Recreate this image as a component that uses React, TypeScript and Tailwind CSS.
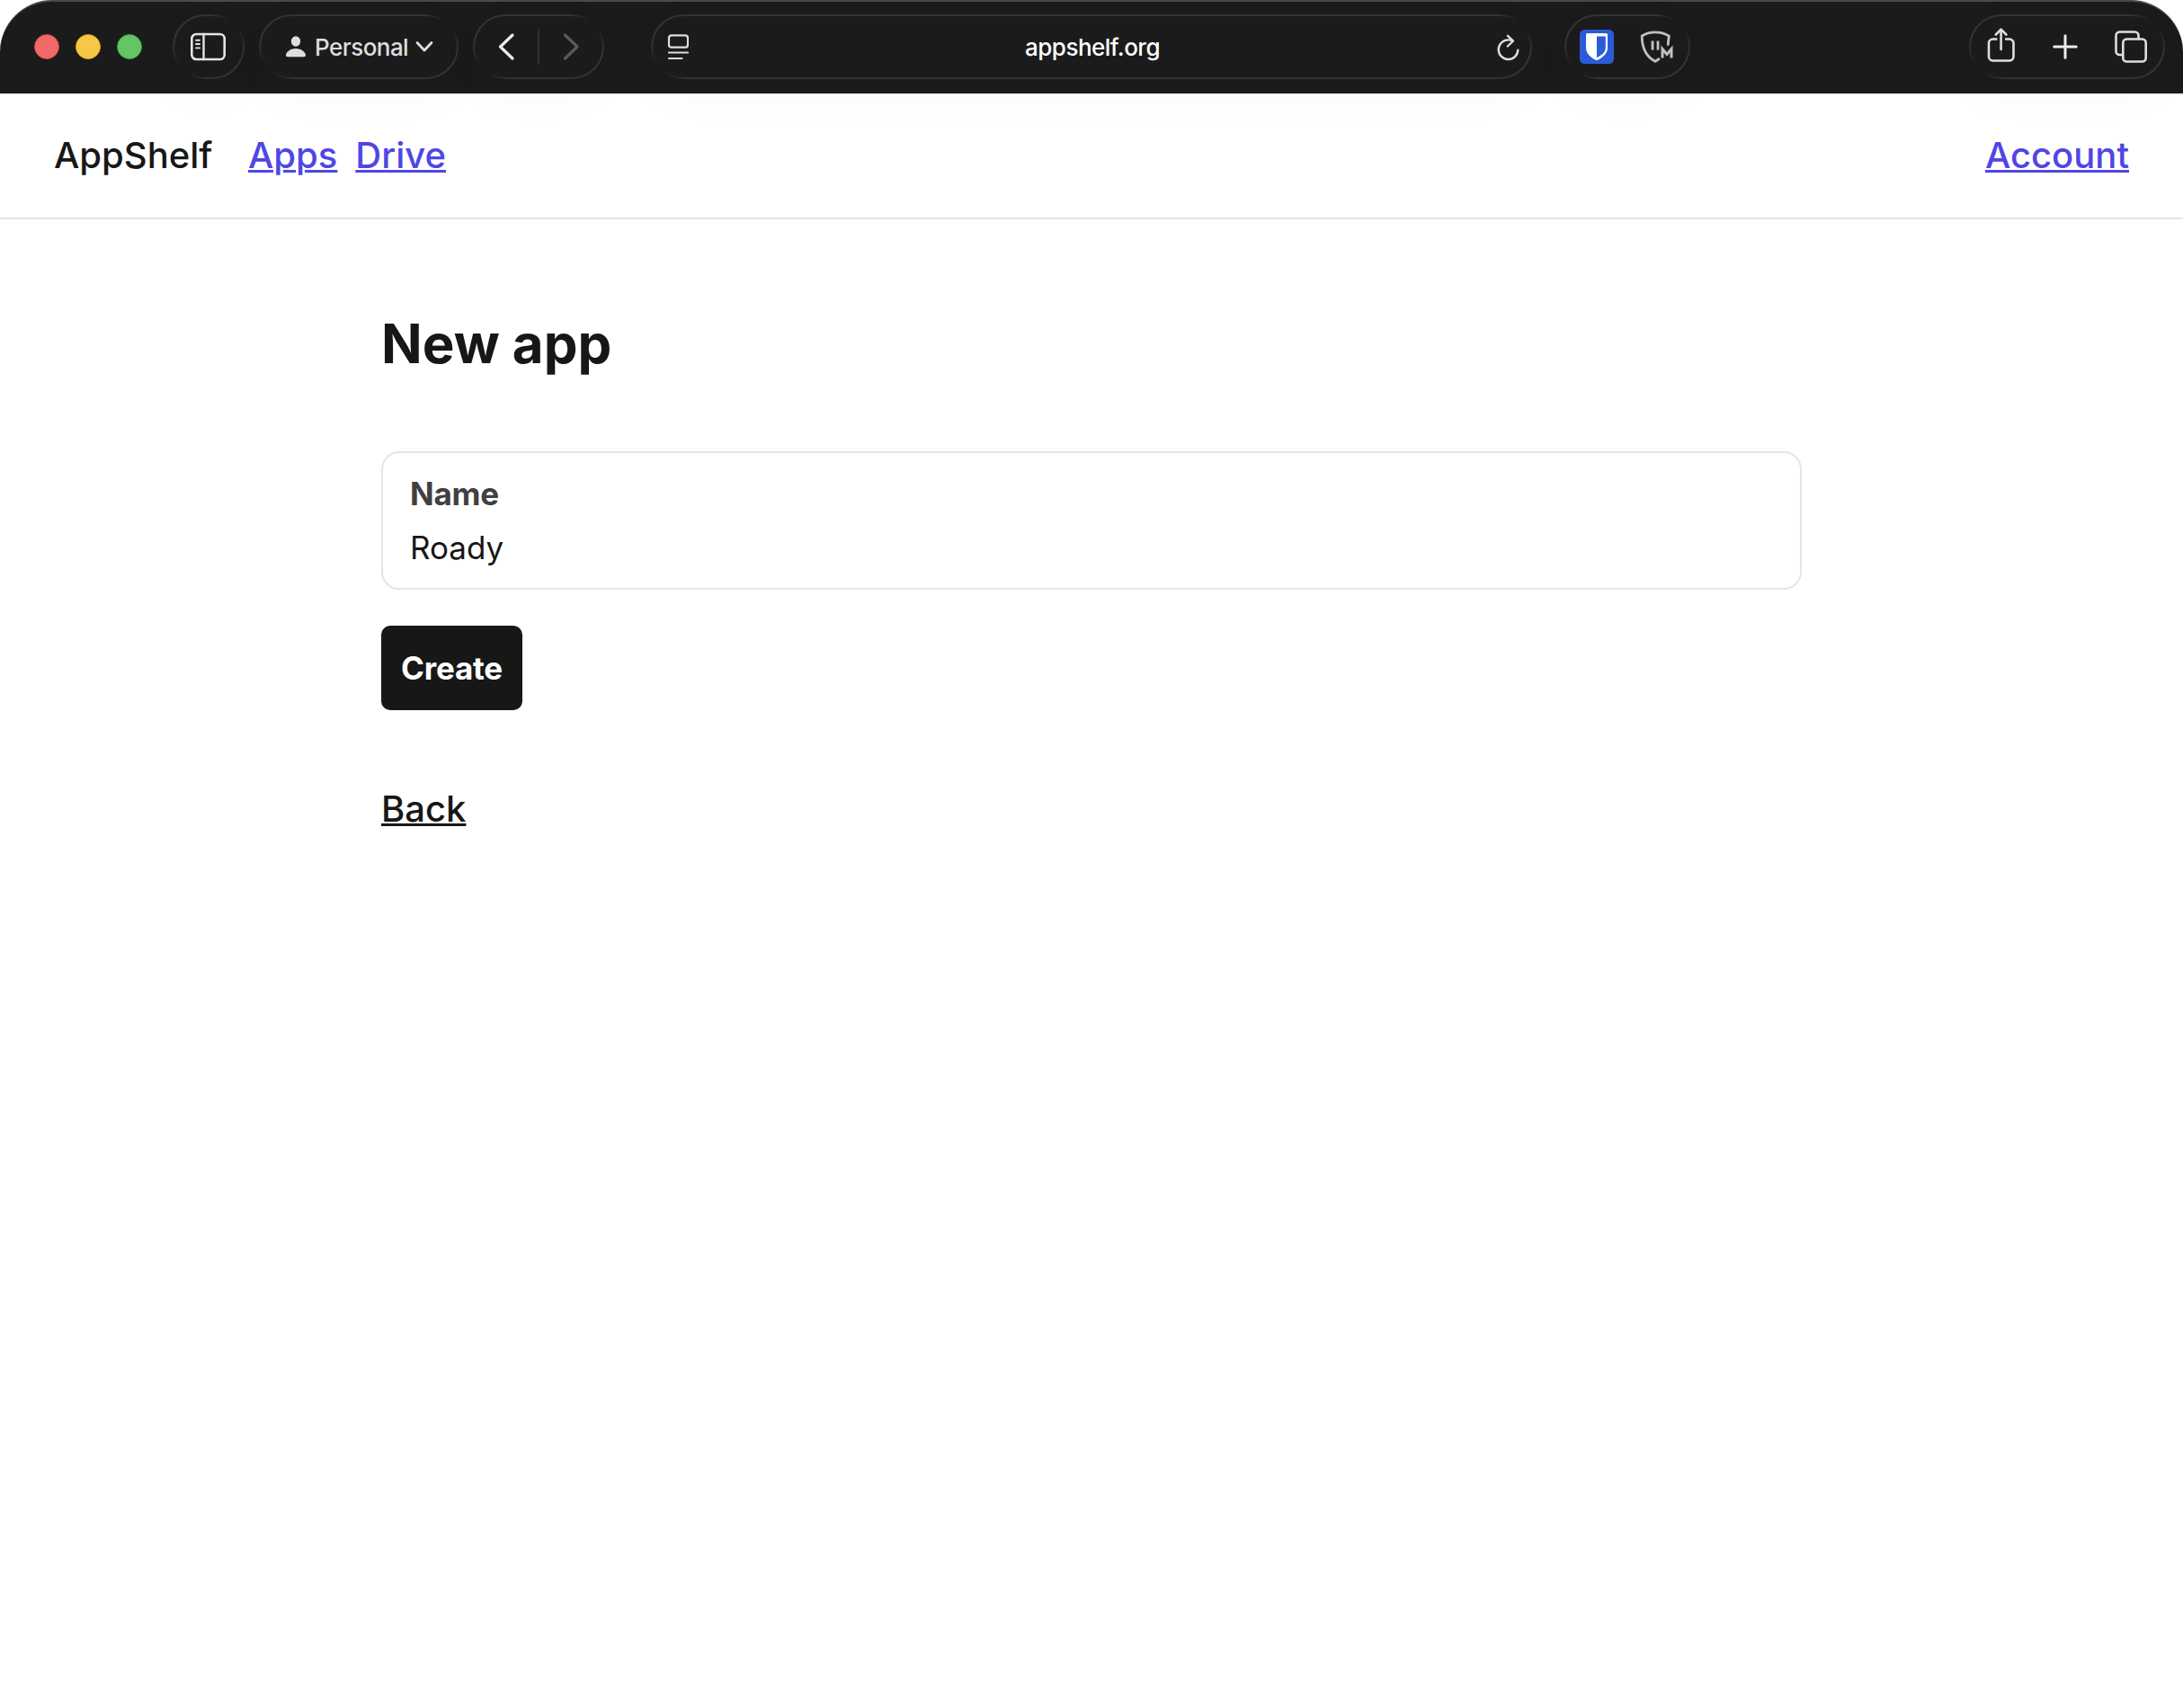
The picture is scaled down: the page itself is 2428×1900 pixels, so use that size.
import type { ReactNode } from "react";
import { clsx } from "clsx";

function Pill({ className, children }: { className?: string; children: ReactNode }) {
  return (
    <div
      className={clsx(
        "flex h-[72px] shrink-0 items-center rounded-[36px] border-2 border-transparent shadow-[0_14px_60px_rgba(0,0,0,0.03)]",
        "[background:linear-gradient(#1b1b1b,#1b1b1b)_padding-box,radial-gradient(circle_at_calc(100%_-_12px)_12px,#1b1b1b_6px,transparent_30px)_border-box,radial-gradient(circle_at_12px_calc(100%_-_12px),#1b1b1b_6px,transparent_30px)_border-box,linear-gradient(#333333,#333333)_border-box]",
        className,
      )}
    >
      {children}
    </div>
  );
}

function Toolbar() {
  return (
    <header className="relative z-10 flex h-[104px] items-center rounded-t-[58px] border-t-2 border-[#4a4a4a] bg-[#1b1b1b] pb-[2px] font-['Inter',sans-serif]">
      <div className="ml-[38px] flex gap-[18px]">
        <span className="size-7 rounded-full border border-[#e0443e] bg-[#ee6a69]" />
        <span className="size-7 rounded-full border border-[#dea123] bg-[#f5c945]" />
        <span className="size-7 rounded-full border border-[#35a83a] bg-[#65c466]" />
      </div>

      <Pill className="ml-[34px] w-[80px] justify-center">
        <svg width="40" height="32" viewBox="0 0 40 32" fill="none" stroke="#e4e4e4" strokeLinecap="round">
          <rect x="1.300" y="2" width="36.400" height="28" rx="5" strokeWidth="2.600" />
          <path d="M14.500 2v28" strokeWidth="2.400" />
          <path d="M6 8.700h4M6 13h4M6 17.400h4" strokeWidth="1.900" />
        </svg>
      </Pill>

      <Pill className="ml-4 w-[222px] pl-[28px]">
        <svg width="22" height="24" viewBox="0 0 22 24" fill="#dedede">
          <ellipse cx="11" cy="6" rx="5.2" ry="5.8" />
          <path d="M2 23.3c-1.2 0-2-.6-2-1.7C0 18.500 4.200 14 11 14s11 4.500 11 7.600c0 1.100-.8 1.700-2 1.700z" />
        </svg>
        <span className="ml-[10px] w-[103px] whitespace-nowrap pt-[2px] text-[26px] font-medium leading-8 tracking-[-0.55px] text-[#dedede]">Personal</span>
        <svg className="ml-[9px]" width="20" height="14" viewBox="0 0 20 14" fill="none" stroke="#dedede" strokeWidth="2.800" strokeLinecap="round" strokeLinejoin="round">
          <path d="M2 2.500l8 8.500 8-8.500" />
        </svg>
      </Pill>

      <Pill className="ml-4 w-[146px] pl-[26px]">
        <svg width="18" height="30" viewBox="0 0 18 30" fill="none" stroke="#ececec" strokeWidth="3.200" strokeLinecap="round" strokeLinejoin="round">
          <path d="M16 2L2.500 15 16 28" />
        </svg>
        <span className="ml-[26px] h-10 w-[2px] bg-[#303030]" />
        <svg className="ml-[26px]" width="18" height="30" viewBox="0 0 18 30" fill="none" stroke="#5a5a5a" strokeWidth="3.200" strokeLinecap="round" strokeLinejoin="round">
          <path d="M2.500 2L16 15 2.500 28" />
        </svg>
      </Pill>

      <Pill className="ml-[52px] w-[980px] pl-[16px] pr-[12px]">
        <svg width="24" height="30" viewBox="0 0 24 30" fill="none" stroke="#dedede" strokeWidth="2.200" strokeLinecap="round">
          <rect x="2" y="2.300" width="21" height="13.400" rx="3" />
          <path d="M2 21.500h21M2 28h14.500" />
        </svg>
        <span className="flex-1 pr-px pt-[2px] text-center text-[26px] font-medium leading-8 tracking-[-0.5px] text-white">appshelf.org</span>
        <svg className="mt-px" width="25" height="30" viewBox="0 0 25 30" fill="none" stroke="#dedede" strokeWidth="2.400" strokeLinecap="round" strokeLinejoin="round">
          <path d="M17.600 7.600C16 6.700 14.300 6.400 12.500 6.400a10.800 10.800 0 1 0 10.800 11.200" />
          <path d="M12 1.800l6 5.700-6.200 6" />
        </svg>
      </Pill>

      <Pill className="ml-9 w-[140px] pl-[15px]">
        <svg width="38" height="38" viewBox="0 0 38 38">
          <rect width="38" height="38" rx="5.500" fill="#2b5bd7" />
          <path fill="#fff" d="M8.500 4h21a1.500 1.500 0 0 1 1.500 1.500V20c0 7.500-6.500 11.500-12 14.300C13.500 31.500 7 27.500 7 20V5.500A1.500 1.500 0 0 1 8.500 4z" />
          <path fill="#2b5bd7" d="M19 7.500h9.800V20c0 5-4.300 8.300-9.800 11.200z" />
        </svg>
        <svg className="ml-[29px]" width="38" height="36" viewBox="0 0 38 36" fill="none" stroke="#c0c0c0" strokeWidth="2.800" strokeLinecap="round" strokeLinejoin="round">
          <path d="M31.200 15.500L32.300 6C28 3.300 23 1.800 17 1.800S6.500 3 2.200 6C2.200 17.500 6 28.500 17 34.300l4-2.500" />
          <path d="M14 11.500v10M20 11.500v10" strokeLinecap="butt" />
          <path d="M25 30.500V20.500l5 6 5-6v10" strokeWidth="3" strokeLinecap="butt" strokeLinejoin="miter" />
        </svg>
      </Pill>

      <Pill className="ml-auto mr-5 w-[218px] pl-[18px]">
        <svg className="-mt-[4px]" width="32" height="40" viewBox="0 0 32 40" fill="none" stroke="#dedede" strokeWidth="2.600" strokeLinecap="round" strokeLinejoin="round">
          <path strokeLinecap="butt" d="M11.500 13.500H6.500a4.500 4.500 0 0 0-4.500 4.500v15a4.500 4.500 0 0 0 4.500 4.500h18.500a4.500 4.500 0 0 0 4.500-4.500V18a4.500 4.500 0 0 0-4.500-4.500h-5" />
          <path d="M15.600 25V3M9.800 8.500l5.800-5.900 5.800 5.900" />
        </svg>
        <svg className="-mt-px ml-[40.5px]" width="28" height="28" viewBox="0 0 28 28" fill="none" stroke="#ececec" strokeWidth="3" strokeLinecap="round">
          <path d="M14 1.800v24.400M1.800 14h24.400" />
        </svg>
        <svg className="-mt-px ml-[41px]" width="36" height="36" viewBox="0 0 36 36" fill="none" stroke="#dedede" strokeWidth="2.600" strokeLinecap="butt">
          <path d="M26.500 9V5.500a4 4 0 0 0-4-4h-17a4 4 0 0 0-4 4v17.500a4 4 0 0 0 4 4H9" />
          <rect x="9.300" y="9.500" width="25.400" height="25" rx="4" />
        </svg>
      </Pill>
    </header>
  );
}

export default function App() {
  return (
    <div className="min-h-[1900px] w-[2428px] bg-white font-['Inter',sans-serif] text-[#171717]">
      <Toolbar />
      <nav className="flex h-[140px] items-center border-b-2 border-[#e5e5e5] px-[60px] text-[40px] font-medium leading-[60px]">
        <span>AppShelf</span>
        <div className="ml-[39.5px] flex gap-5 text-[#4f46e5]">
          <a className="underline decoration-[3px] underline-offset-2">Apps</a>
          <a className="underline decoration-[3px] underline-offset-2">Drive</a>
        </div>
        <a className="ml-auto text-[#4f46e5] underline decoration-[3px] underline-offset-2">Account</a>
      </nav>
      <main className="mx-auto flex w-[1580px] flex-col items-start pt-[103px]">
        <h1 className="text-[60px] font-bold leading-[70px]">New app</h1>
        <div className="mt-[85px] flex h-[154px] w-full flex-col rounded-[20px] border-2 border-[#e5e5e5] px-[30px] pt-[19px] text-[35px]">
          <label className="font-bold leading-[52px] tracking-[-0.2px] text-[#404040]">Name</label>
          <span className="mt-[8px] leading-[52px]">Roady</span>
        </div>
        <button className="mt-10 h-[94px] w-[157px] rounded-[10px] bg-[#171717] text-[35px] font-bold tracking-[-0.2px] text-white">Create</button>
        <a className="mt-[80px] text-[40px] font-medium leading-[60px] underline decoration-[3px] underline-offset-2">Back</a>
      </main>
    </div>
  );
}
